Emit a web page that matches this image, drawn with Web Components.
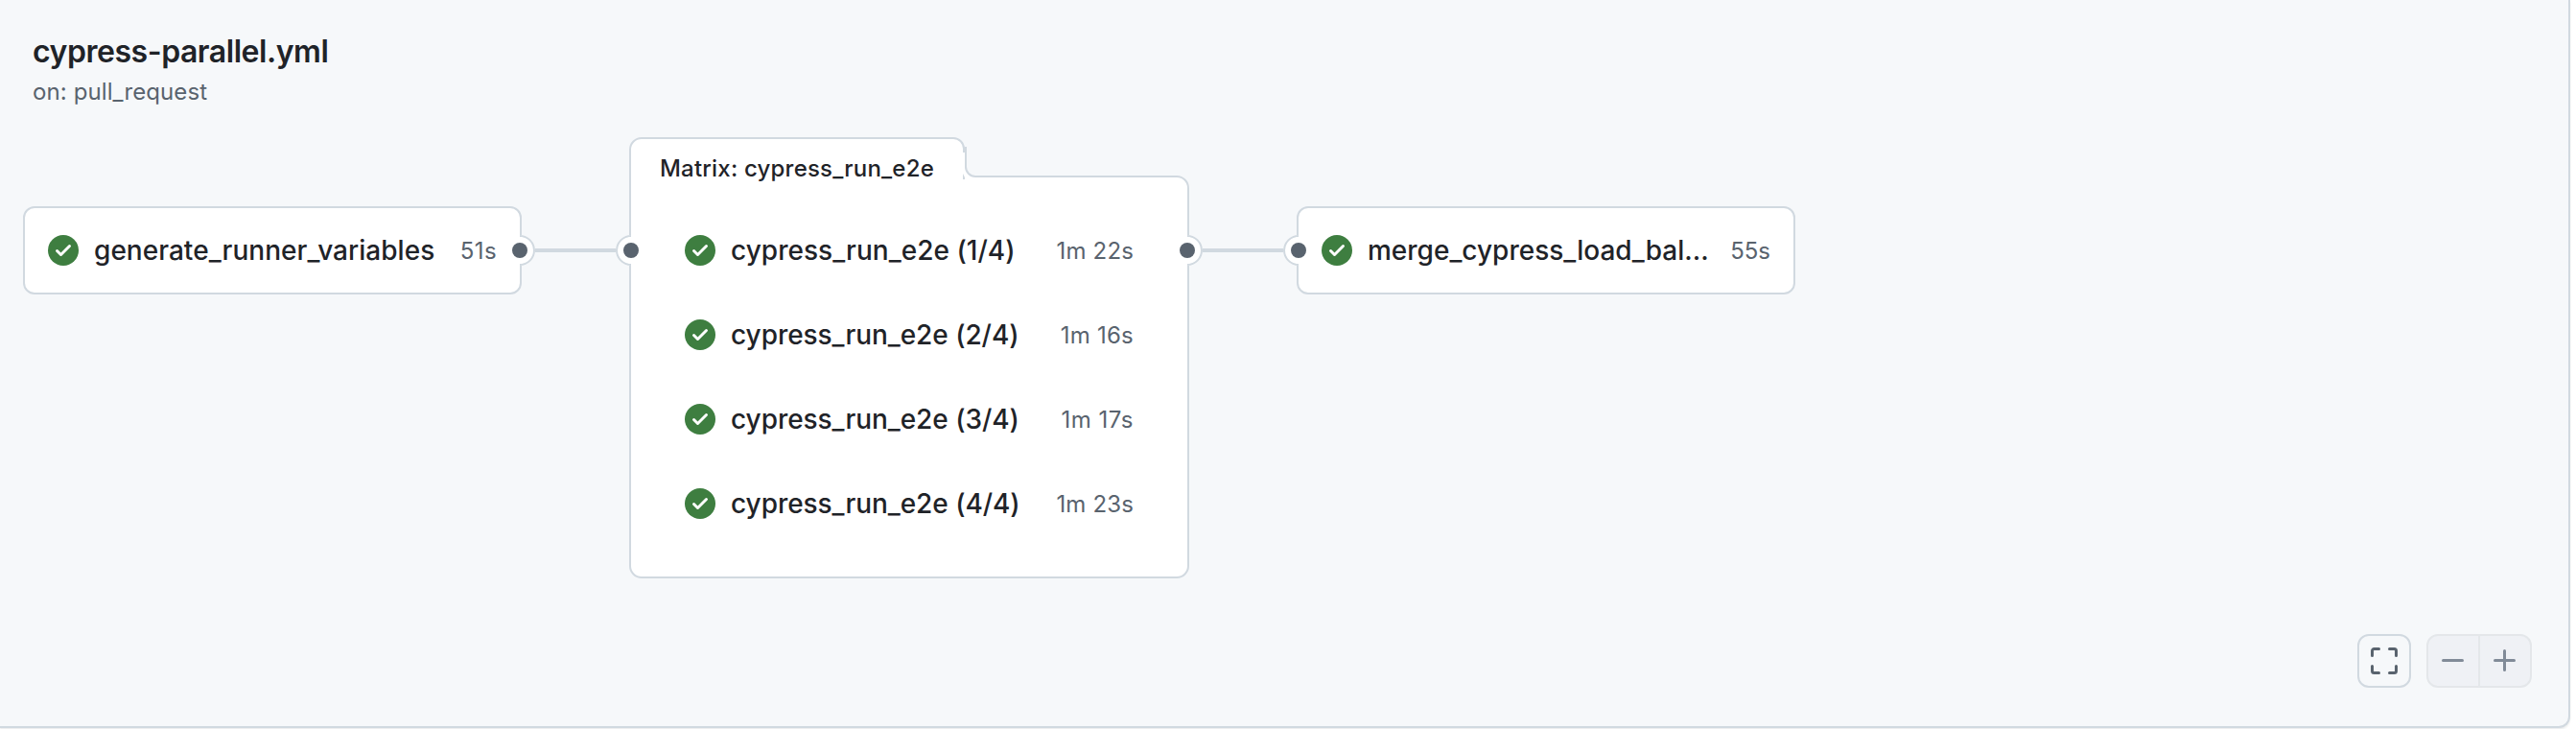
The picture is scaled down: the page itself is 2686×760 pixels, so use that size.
<!DOCTYPE html>
<html lang="en">
<head>
<meta charset="utf-8">
<title>cypress-parallel.yml</title>
<style>
:root{--bg:#f6f8fa;--line:#d1d9e0;--fg:#1f2328;--muted:#59636e;--ok:#3e7e40}
html,body{margin:0;height:100%}
body{background:#fff;font-family:Inter,"Liberation Sans",sans-serif;color:var(--fg);overflow:hidden}
</style>
</head>
<body>
<workflow-panel>
  <workflow-header slot="header" file="cypress-parallel.yml" trigger="on: pull_request"></workflow-header>
  <job-card name="generate_runner_variables" time="51s" track=".03" time-track=".4" out></job-card>
  <graph-link></graph-link>
  <matrix-card label="Matrix: cypress_run_e2e" in out>
    <job-row name="cypress_run_e2e (1/4)" time="1m 22s" track=".03" time-track=".15"></job-row>
    <job-row name="cypress_run_e2e (2/4)" time="1m 16s" track="-.05" time-track=".25"></job-row>
    <job-row name="cypress_run_e2e (3/4)" time="1m 17s" track="-.05" time-track=".5"></job-row>
    <job-row name="cypress_run_e2e (4/4)" time="1m 23s" track="-.05" time-track=".15"></job-row>
  </matrix-card>
  <graph-link></graph-link>
  <job-card name="merge_cypress_load_bal..." time="55s" track="0" time-track="0" in></job-card>
  <zoom-controls slot="controls"></zoom-controls>
</workflow-panel>
<script>
const define = (name, render) => customElements.define(name, class extends HTMLElement {
  connectedCallback() {
    if (this.shadowRoot) return;
    const t = document.createElement('template');
    t.innerHTML = render(this);
    this.attachShadow({mode: 'open'}).append(t.content.cloneNode(true));
  }
});

define('workflow-panel', () => `<style>
:host{display:flex;flex-direction:column;box-sizing:border-box;width:2680px;height:759px;background:var(--bg);border:solid var(--line);border-width:0 2px 2px 0;border-bottom-right-radius:12px;box-shadow:0 2px 2px rgba(31,35,40,.08)}
.graph{display:flex;align-items:flex-start;padding:29px 0 0 24px;flex:1}
.foot{display:flex;justify-content:flex-end;padding:0 38px 40px 0}
</style><slot name="header"></slot><div class="graph"><slot></slot></div><div class="foot"><slot name="controls"></slot></div>`);

define('workflow-header', e => `<style>
:host{display:block;padding:34px 34px 0;height:80px}
h1{margin:0;font-size:32px;line-height:40px;font-weight:600;letter-spacing:-.46px}
p{margin:4px 0 0;font-size:24px;line-height:36px;color:var(--muted);letter-spacing:.1px}
</style><h1>${e.getAttribute('file')}</h1><p>${e.getAttribute('trigger')}</p>`);

define('status-icon', () => `<style>:host{display:block;width:32px;height:32px;flex:none}svg{display:block}</style>
<svg width="32" height="32" viewBox="0 0 16 16"><circle cx="8" cy="8" r="8" fill="var(--ok)"/><path fill="#fff" d="M11.78 6.28a.75.75 0 0 0-.018-1.042.75.75 0 0 0-1.042-.018L6.75 9.19 5.28 7.72a.75.75 0 0 0-1.042.018.75.75 0 0 0-.018 1.042l2 2a.75.75 0 0 0 1.06 0Z"/></svg>`);

define('job-row', e => `<style>
:host{display:flex;align-items:center;height:88px}
.name{margin-left:16px;font-size:28px;line-height:40px;font-weight:500;white-space:nowrap;letter-spacing:${e.getAttribute('track')}px}
.time{margin-left:auto;padding-top:2px;font-size:24px;line-height:36px;color:var(--muted);white-space:nowrap;letter-spacing:${e.getAttribute('time-track')}px}
</style><status-icon></status-icon><span class="name">${e.getAttribute('name')}</span><span class="time">${e.getAttribute('time')}</span>`);

define('graph-port', () => `<style>
:host{display:block;position:absolute;top:var(--port-top);width:32px;height:32px}
:host([side=out]){right:-16px}:host([side=in]){left:-16px}
svg{display:block}:host([side=in]) svg{transform:scaleX(-1)}
</style><svg width="32" height="32" viewBox="0 0 32 32"><path d="M14 2h2V0a16 16 0 0 1 0 32v-2h-2Z" fill="#fff"/><path d="M16 1a15 15 0 0 1 0 30" fill="none" stroke="var(--line)" stroke-width="2"/><path d="M16 2h2.500v28H16Z" fill="#fff"/><circle cx="16" cy="16" r="8" fill="var(--muted)"/></svg>`);

const ports = e => (e.hasAttribute('in') ? '<graph-port side="in"></graph-port>' : '') + (e.hasAttribute('out') ? '<graph-port side="out"></graph-port>' : '');

define('job-card', e => `<style>
:host{display:block;position:relative;box-sizing:border-box;width:520px;height:92px;margin-top:72px;padding:0 24px;border:2px solid var(--line);border-radius:12px;background:#fff;--port-top:28px}
</style><job-row name="${e.getAttribute('name')}" time="${e.getAttribute('time')}" track="${e.getAttribute('track')}" time-track="${e.getAttribute('time-track')}"></job-row>${ports(e)}`);

define('graph-link', () => `<style>:host{display:block;width:112px;height:4px;margin-top:116px;background:var(--line)}</style>`);

define('matrix-card', e => `<style>
:host{display:block;position:relative;width:584px;height:460px;--port-top:102px}
.shape{position:absolute;inset:0}
.body{position:relative;padding:0 58px}
.tab{padding:15px 0 0 32px;margin-left:-58px;height:60px;box-sizing:border-box;font-size:24px;line-height:36px;font-weight:500;white-space:nowrap;letter-spacing:.2px}
.rows{padding-top:14px}
.ports{position:absolute;inset:0 2px}
</style><svg class="shape" width="584" height="460" fill="none" stroke="var(--line)" stroke-width="2">
<path d="M1 13A12 12 0 0 1 13 1H338A11 11 0 0 1 349 12L351 12V31A10 10 0 0 0 361 41H571A12 12 0 0 1 583 53V447A12 12 0 0 1 571 459H13A12 12 0 0 1 1 447Z" fill="#fff" stroke="none"/>
<path d="M351 10V31A10 10 0 0 0 361 41H571A12 12 0 0 1 583 53V447A12 12 0 0 1 571 459H13A12 12 0 0 1 1 447V13A12 12 0 0 1 13 1H338A11 11 0 0 1 349 12V16"/>
<path d="M348 38L350 42V44H348Z" fill="var(--line)" stroke="none"/></svg>
<div class="body"><div class="tab">${e.getAttribute('label')}</div><div class="rows"><slot></slot></div></div><div class="ports">${ports(e)}</div>`);

define('zoom-controls', () => `<style>
:host{display:flex;gap:16px}
button{display:grid;place-items:center;box-sizing:border-box;width:56px;height:56px;margin:0;padding:0;border:2px solid var(--line);border-radius:12px;background:var(--bg);color:var(--muted)}
.group{display:flex}
.group button{background:#eff1f5;border-color:#e4e7ea;color:#818b98}
.group button:first-child{border-radius:12px 0 0 12px}
.group button:last-child{border-radius:0 12px 12px 0;margin-left:-2px}
svg{display:block}
</style><button aria-label="Fit"><svg width="32" height="32" viewBox="0 0 32 32" fill="none" stroke="currentColor" stroke-width="3" stroke-linecap="round" stroke-linejoin="round"><path d="M3.5 10.500v-5a2 2 0 0 1 2-2h5M21.500 3.500h5a2 2 0 0 1 2 2v5M28.500 21.500v5a2 2 0 0 1-2 2h-5M10.500 28.500h-5a2 2 0 0 1-2-2v-5"/></svg></button>
<div class="group"><button aria-label="Zoom out"><svg width="32" height="32" viewBox="0 0 32 32" fill="none" stroke="currentColor" stroke-width="3" stroke-linecap="round"><path d="M5.500 15.500h20"/></svg></button><button aria-label="Zoom in"><svg width="32" height="32" viewBox="0 0 32 32" fill="none" stroke="currentColor" stroke-width="3" stroke-linecap="round"><path d="M5.500 15.500h20M15.500 5.500v20"/></svg></button></div>`);
</script>
</body>
</html>
